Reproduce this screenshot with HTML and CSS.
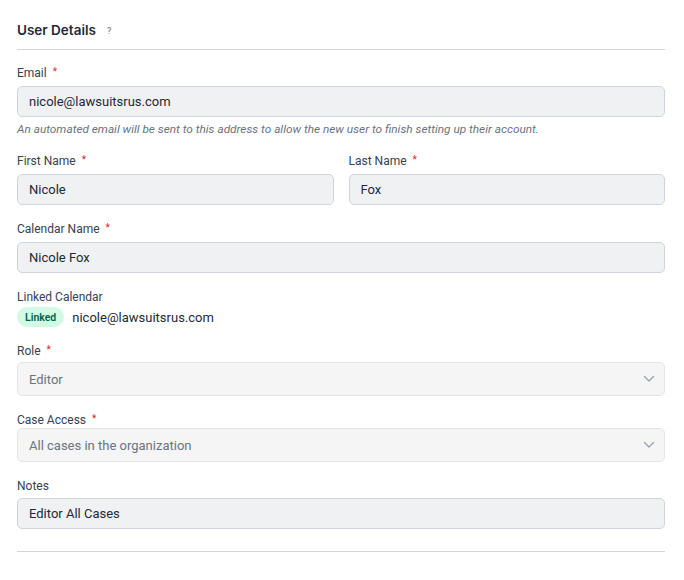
FILE: index.html
```html
<!DOCTYPE html>
<html>
<head>
<meta charset="utf-8">
<link rel="stylesheet" href="styles.css">
</head>
<body>
<div class="form">
  <div class="header">
    <h2 class="title">User Details</h2>
    <span class="help">?</span>
  </div>

  <div class="field">
    <label class="label">Email <span class="req">*</span></label>
    <div class="input">nicole@lawsuitsrus.com</div>
    <div class="hint">An automated email will be sent to this address to allow the new user to finish setting up their account.</div>
  </div>

  <div class="row">
    <div class="field">
      <label class="label">First Name <span class="req">*</span></label>
      <div class="input">Nicole</div>
    </div>
    <div class="field">
      <label class="label">Last Name <span class="req">*</span></label>
      <div class="input">Fox</div>
    </div>
  </div>

  <div class="field">
    <label class="label">Calendar Name <span class="req">*</span></label>
    <div class="input">Nicole Fox</div>
  </div>

  <div class="field">
    <label class="label">Linked Calendar</label>
    <div class="linked">
      <span class="badge">Linked</span>
      <span class="linked-email">nicole@lawsuitsrus.com</span>
    </div>
  </div>

  <div class="field">
    <label class="label role">Role <span class="req">*</span></label>
    <div class="select">
      <span>Editor</span>
      <svg class="chev" width="12" height="8" viewBox="0 0 12 8"><path d="M1.5 1.5 L6 6 L10.5 1.5" fill="none" stroke="#9ca3af" stroke-width="1.4" stroke-linecap="round" stroke-linejoin="round"/></svg>
    </div>
  </div>

  <div class="field">
    <label class="label tight">Case Access <span class="req">*</span></label>
    <div class="select">
      <span>All cases in the organization</span>
      <svg class="chev" width="12" height="8" viewBox="0 0 12 8"><path d="M1.5 1.5 L6 6 L10.5 1.5" fill="none" stroke="#9ca3af" stroke-width="1.4" stroke-linecap="round" stroke-linejoin="round"/></svg>
    </div>
  </div>

  <div class="field">
    <label class="label notes">Notes</label>
    <div class="input">Editor All Cases</div>
  </div>

  <div class="footer-rule"></div>
</div>
</body>
</html>
```

FILE: styles.css
```css
* { box-sizing: border-box; }
body {
  margin: 0;
  background: #ffffff;
  font-family: Roboto, "Liberation Sans", sans-serif;
  color: #1f2937;
}
.form {
  width: 648px;
  margin-left: 17px;
  padding-top: 20px;
  display: flex;
  flex-direction: column;
  gap: 16px;
}
.header {
  display: flex;
  align-items: center;
  height: 30px;
  padding-bottom: 9px;
  border-bottom: 1px solid #d1d5db;
  margin-bottom: -1px;
}
.title {
  margin: 0;
  font-family: Inter, Roboto, sans-serif;
  font-size: 13.5px;
  font-weight: 600;
  line-height: 20px;
  color: #1f2937;
}
.help {
  margin-left: 11px;
  margin-top: 2px;
  font-size: 9px;
  color: #6b7280;
}
.field {
  display: flex;
  flex-direction: column;
  flex: 1;
  min-width: 0;
}
.row {
  display: flex;
  gap: 15px;
}
.label {
  display: block;
  font-size: 12px;
  line-height: 16px;
  height: 16px;
  color: #374151;
  margin-bottom: 5px;
}
.label.role { margin-bottom: 3px; }
.label.tight { margin-bottom: 0px; }
.label.notes { margin-bottom: 4px; }
.req {
  color: #dc2626;
  font-size: 10px;
  line-height: 0;
  margin-left: 3px;
  vertical-align: 2px;
}
.input {
  height: 31px;
  border: 1px solid #cfd4dc;
  border-radius: 5px;
  background: #f0f1f3;
  padding: 0 11px;
  display: flex;
  align-items: center;
  font-size: 13px;
  color: #1f2937;
}
.hint {
  margin-top: 5px;
  font-size: 11.8px;
  line-height: 15px;
  font-style: italic;
  color: #6b7280;
}
.linked {
  display: flex;
  align-items: center;
  gap: 8px;
  margin-top: -3px;
}
.badge {
  display: inline-flex;
  align-items: center;
  height: 20px;
  padding: 0 8px;
  border-radius: 10px;
  background: #d1fae5;
  color: #065f46;
  font-size: 10.5px;
  font-weight: 600;
}
.linked-email {
  font-size: 13px;
  color: #1f2937;
}
.select {
  height: 34px;
  border: 1px solid #e3e5e9;
  border-radius: 5px;
  background: #f5f5f6;
  padding: 0 9px 0 11px;
  display: flex;
  align-items: center;
  justify-content: space-between;
  font-size: 13px;
  color: #6b7280;
}
.chev { display: block; }
.footer-rule {
  height: 1px;
  background: #d1d5db;
  margin-top: 6px;
}
```
